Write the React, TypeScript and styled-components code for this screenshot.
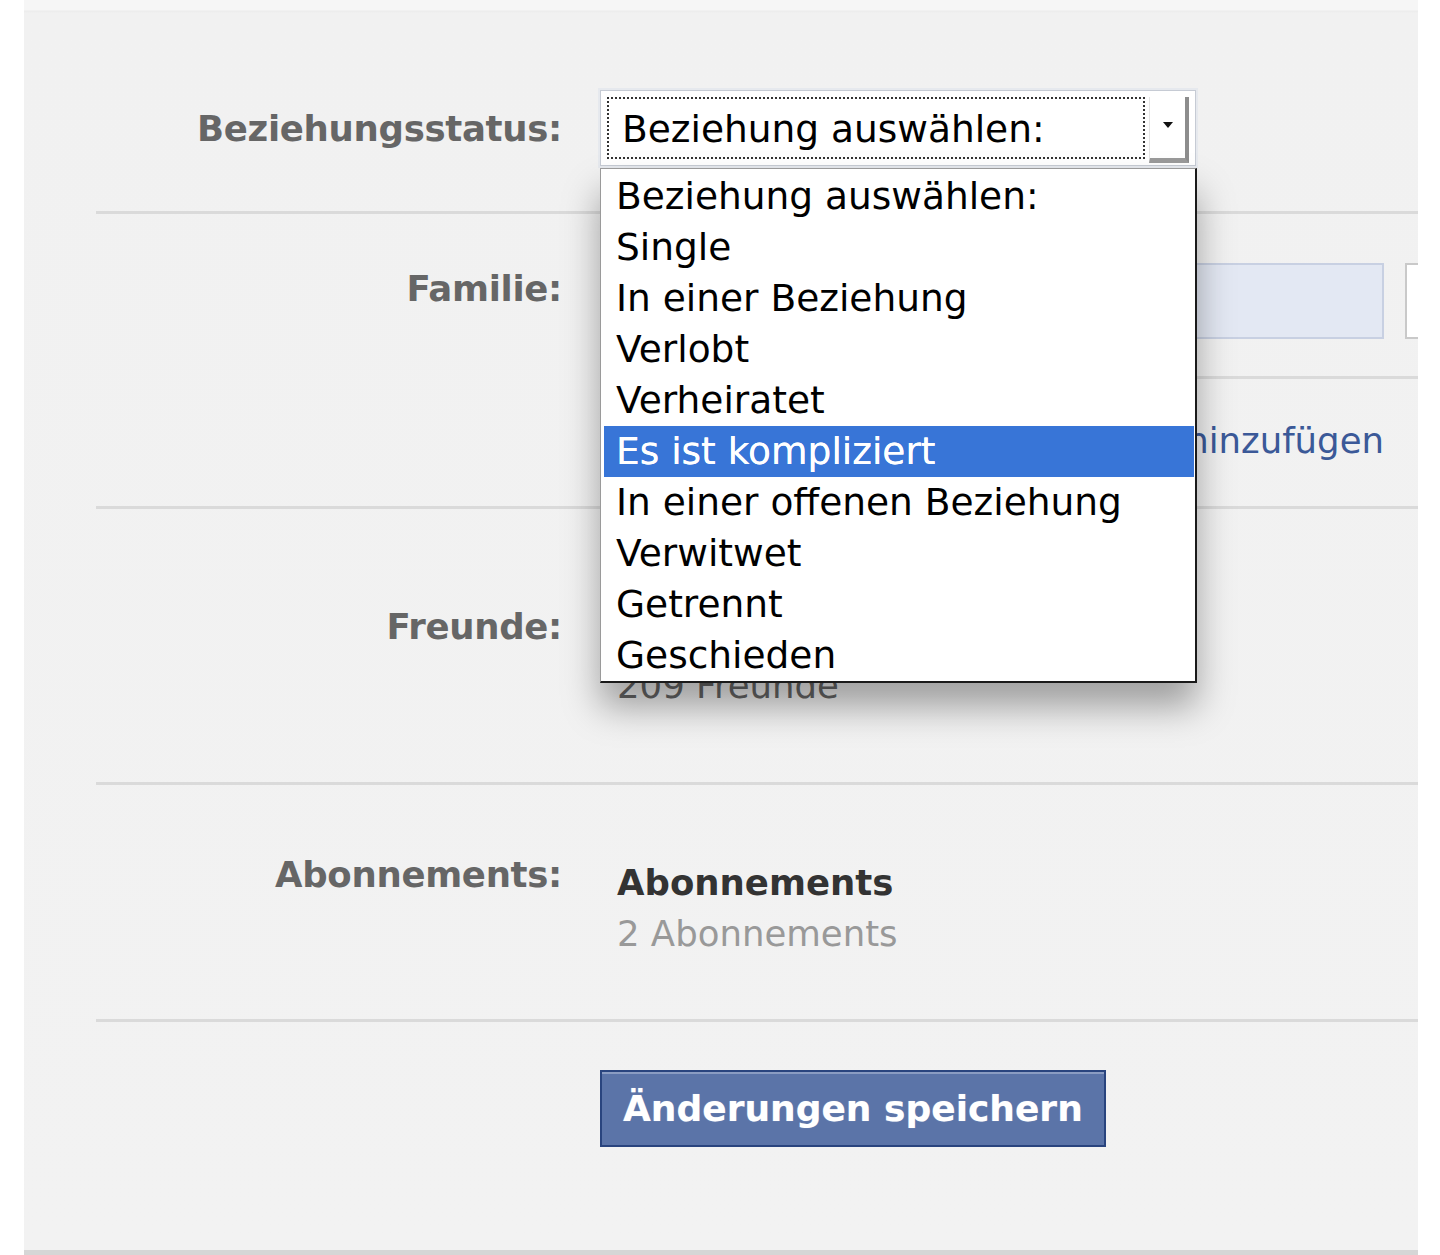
import styled, { createGlobalStyle } from 'styled-components'

const options = [
    'Beziehung auswählen:',
    'Single',
    'In einer Beziehung',
    'Verlobt',
    'Verheiratet',
    'Es ist kompliziert',
    'In einer offenen Beziehung',
    'Verwitwet',
    'Getrennt',
    'Geschieden',
]

const selected = 'Es ist kompliziert'

export default function App() {
    return (
        <>
            <GlobalStyle />
            <Panel>
                <Form>
                    <Row $first $center>
                        <Label>Beziehungsstatus:</Label>
                        <SelectWrap>
                            <SelectBox>
                                <FocusRing>Beziehung auswählen:</FocusRing>
                                <ArrowButton>
                                    <svg width="12" height="8" viewBox="0 0 12 8">
                                        <path d="M1 1h10L6 7z" fill="#111" />
                                    </svg>
                                </ArrowButton>
                            </SelectBox>
                            <Menu>
                                {options.map((name) => (
                                    <MenuItem key={name} $active={name === selected}>
                                        {name}
                                    </MenuItem>
                                ))}
                            </Menu>
                        </SelectWrap>
                    </Row>

                    <Row $pad="49px 0 40px">
                        <Label>Familie:</Label>
                        <div>
                            <FamilyEntry>
                                <NameInput />
                                <RelationInput />
                            </FamilyEntry>
                            <SubDivider />
                            <AddLink>Familienmitglied hinzufügen</AddLink>
                        </div>
                    </Row>

                    <Row $pad="89px 0 71px">
                        <Label $shift>Freunde:</Label>
                        <Summary>
                            <Title>Freunde</Title>
                            <Count $hidden>209 Freunde</Count>
                        </Summary>
                    </Row>

                    <Row $pad="61px 0 60px">
                        <Label $shift>Abonnements:</Label>
                        <Summary>
                            <Title>Abonnements</Title>
                            <Count>2 Abonnements</Count>
                        </Summary>
                    </Row>

                    <Row $pad="48px 0 0">
                        <span />
                        <div>
                            <SaveButton>Änderungen speichern</SaveButton>
                        </div>
                    </Row>
                </Form>
            </Panel>
        </>
    )
}

const GlobalStyle = createGlobalStyle`
    html, body {
        margin: 0;
        background: #fff;
        font-family: "DejaVu Sans", "Liberation Sans", sans-serif;
    }
`

const Panel = styled.div`
    position: relative;
    box-sizing: border-box;
    margin: 0 22px 0 24px;
    height: 1255px;
    overflow: hidden;
    background: linear-gradient(#f6f6f6 0, #f6f6f6 10px, #ececec 11px, #f1f1f1 13px, #f2f2f2 100%);
    border-bottom: 5px solid #d6d6d6;
`

const Form = styled.div`
    padding-left: 72px;
`

const Row = styled.div<{ $first?: boolean; $center?: boolean; $pad?: string }>`
    display: grid;
    grid-template-columns: 466px 1fr;
    column-gap: 38px;
    align-items: ${(p) => (p.$center ? 'center' : 'start')};
    padding: ${(p) => p.$pad || '90px 0 45px'};
    border-top: ${(p) => (p.$first ? 'none' : '3px solid #dadada')};
`

const Label = styled.div<{ $shift?: boolean }>`
    padding-top: ${(p) => (p.$shift ? '3px' : '0')};
    text-align: right;
    font-size: 35.5px;
    line-height: 51px;
    font-weight: bold;
    letter-spacing: -0.3px;
    color: #666;
`

const SelectWrap = styled.div`
    position: relative;
    width: 597px;
`

const SelectBox = styled.div`
    box-sizing: border-box;
    display: flex;
    gap: 4px;
    width: 596px;
    height: 76px;
    padding: 6px 6px 3px 6px;
    background: #fff;
    border: 1px solid #c6cbd4;
    box-shadow: 0 0 0 2px #e6e9ee;
`

const FocusRing = styled.div`
    box-sizing: border-box;
    flex: 1;
    height: 62px;
    padding-left: 13px;
    border: 2px dotted #333;
    font-size: 37.5px;
    line-height: 60px;
    color: #000;
`

const ArrowButton = styled.div`
    box-sizing: border-box;
    width: 40px;
    height: 66px;
    display: flex;
    align-items: center;
    justify-content: center;
    padding-bottom: 6px;
    background: #fff;
    border-right: 4px solid #8d8d8d;
    border-bottom: 5px solid #9a9a9a;
    border-left: 1px solid #e4e4e4;
`

const Menu = styled.div`
    position: absolute;
    top: 78px;
    left: 0;
    box-sizing: border-box;
    width: 597px;
    height: 515px;
    padding: 2px 1px 0 3px;
    background: #fff;
    border-top: 1px solid #9a9a9a;
    border-left: 1px solid #9a9a9a;
    border-right: 2px solid #1a1a1a;
    border-bottom: 2px solid #1a1a1a;
    box-shadow: 0 24px 34px rgba(0, 0, 0, 0.34);
    z-index: 2;
`

const MenuItem = styled.div<{ $active?: boolean }>`
    height: 51px;
    padding-left: 12px;
    font-size: 37.5px;
    line-height: 51px;
    white-space: nowrap;
    color: ${(p) => (p.$active ? '#fff' : '#000')};
    background: ${(p) => (p.$active ? '#3875d7' : 'transparent')};
    text-shadow: ${(p) => (p.$active ? '0 0 0.6px #fff' : 'none')};
`

const FamilyEntry = styled.div`
    display: flex;
    gap: 21px;
`

const NameInput = styled.div`
    box-sizing: border-box;
    flex: 0 0 784px;
    height: 76px;
    background: #e3e8f3;
    border: 2px solid #c8d0e2;
`

const RelationInput = styled.div`
    box-sizing: border-box;
    flex: 0 0 300px;
    height: 76px;
    background: #fff;
    border: 2px solid #c9c9c9;
`

const SubDivider = styled.div`
    margin: 37px 0 36px;
    border-top: 3px solid #dadada;
`

const AddLink = styled.a`
    display: block;
    width: 784px;
    text-align: right;
    font-size: 35.5px;
    line-height: 51px;
    color: #3b5998;
    white-space: nowrap;
`

const Summary = styled.div`
    margin-top: 11px;
    padding-left: 17px;
    font-size: 35.5px;
    line-height: 51px;
`

const Title = styled.div`
    font-weight: bold;
    color: #333;
`

const Count = styled.div<{ $hidden?: boolean }>`
    color: ${(p) => (p.$hidden ? '#666' : '#999')};
`

const SaveButton = styled.button`
    box-sizing: border-box;
    height: 77px;
    padding: 0 21px;
    font-family: inherit;
    font-size: 36px;
    font-weight: bold;
    color: #fff;
    background: #5b74a8;
    border: 2px solid #29447e;
    box-shadow: inset 0 2px 0 #8a9cc2;
    text-shadow: 0 0 1px rgba(255, 255, 255, 0.4);
`
